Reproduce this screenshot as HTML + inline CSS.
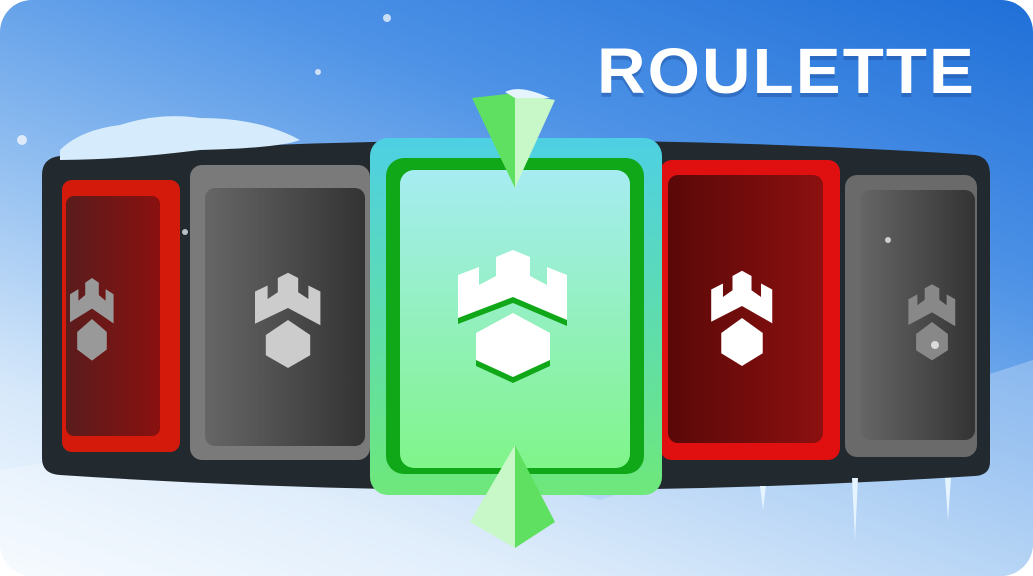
<!DOCTYPE html>
<html><head><style>
body{margin:0;width:1033px;height:576px;overflow:hidden;background:#fff;font-family:"Liberation Sans",sans-serif}
.bg{position:absolute;left:0;top:0;width:1033px;height:576px;border-radius:32px;overflow:hidden;
background:linear-gradient(200deg,#1f6fd8 0%,#4d92e6 30%,#8fbdf0 55%,#d6e8fa 80%,#f4f9ff 100%)}
.abs{position:absolute}
.title{position:absolute;left:597px;top:34px;font-size:64px;font-weight:bold;color:#fff;letter-spacing:2px;transform:scaleX(1.05);transform-origin:left top;text-shadow:0 4px 0 rgba(30,80,160,.45)}
</style></head><body>
<div class="bg">
<svg class="abs" style="left:0;top:0" width="1033" height="576">
<defs>
<linearGradient id="red" x1="0" x2="1"><stop offset="0" stop-color="#5a1c1c"/><stop offset="1" stop-color="#8a1010"/></linearGradient>
<linearGradient id="gray" x1="0" x2="1"><stop offset="0" stop-color="#666"/><stop offset="1" stop-color="#333"/></linearGradient>
<linearGradient id="cen" x1="0" y1="0" x2="0" y2="1"><stop offset="0" stop-color="#4ed0e4"/><stop offset="1" stop-color="#6ee87a"/></linearGradient>
<linearGradient id="cin" x1="0" y1="0" x2="0" y2="1"><stop offset="0" stop-color="#a6ecf2"/><stop offset="1" stop-color="#80f58a"/></linearGradient>
<linearGradient id="red2" x1="0" x2="1"><stop offset="0" stop-color="#5a0808"/><stop offset="1" stop-color="#8c1010"/></linearGradient>
<g id="ic"><path d="M458 275L479 267V285L496 276V257L513 250L530 257V276L547 285V267L567 275V320L513 297L458 318Z"/><path d="M513 313L550 333V360L513 377L476 360V333Z"/></g>
</defs>
<path d="M0 576 L0 470 Q300 420 600 500 L1033 360 L1033 576Z" fill="#fff" opacity=".25"/>
<path d="M42 175 Q42 158 60 156 Q515 125 975 155 Q990 157 990 175 V462 Q990 475 975 476 Q515 505 60 475 Q42 474 42 458Z" fill="#222a30"/>
<path d="M60 150 Q80 130 120 125 Q160 112 200 118 Q260 118 300 140 Q280 148 200 150 Q120 160 60 160Z" fill="#d6ebfb"/>
<rect x="62" y="180" width="118" height="272" rx="10" fill="#d41a0a"/>
<rect x="66" y="196" width="94" height="240" rx="8" fill="url(#red)"/>
<rect x="190" y="165" width="180" height="295" rx="12" fill="#7a7a7a"/>
<rect x="205" y="188" width="160" height="258" rx="10" fill="url(#gray)"/>
<rect x="660" y="160" width="180" height="300" rx="12" fill="#e01010"/>
<rect x="668" y="175" width="155" height="268" rx="10" fill="url(#red2)"/>
<rect x="845" y="175" width="132" height="282" rx="12" fill="#6a6a6a"/>
<rect x="860" y="190" width="115" height="250" rx="10" fill="url(#gray)"/>
<rect x="370" y="138" width="292" height="357" rx="18" fill="url(#cen)"/>
<rect x="386" y="158" width="258" height="316" rx="18" fill="#10a818"/>
<rect x="400" y="170" width="230" height="298" rx="14" fill="url(#cin)"/>
<g fill="#10a818" transform="translate(0,6)"><use href="#ic"/></g>
<g fill="#fff"><use href="#ic"/></g>
<g fill="#ccc" transform="translate(288,320) scale(.6,.75) translate(-513,-313)"><use href="#ic"/></g>
<g fill="#999" transform="translate(92,319) scale(.4,.65) translate(-513,-313)"><use href="#ic"/></g>
<g fill="#fff" transform="translate(742,318) scale(.56,.75) translate(-513,-313)"><use href="#ic"/></g>
<g fill="#888" transform="translate(932,322) scale(.43,.6) translate(-513,-313)"><use href="#ic"/></g>
<path d="M472 98 L515 93 L515 188Z" fill="#60e060"/><path d="M515 93 L555 100 L515 188Z" fill="#c8f8c8"/>
<path d="M505 92 Q520 84 550 98 L515 98Z" fill="#e6f4ff"/>
<path d="M515 445 L470 522 L515 548Z" fill="#c8f8c8"/><path d="M515 445 L555 522 L515 548Z" fill="#60e060"/>
<g fill="#fff" opacity=".7"><circle cx="387" cy="18" r="4"/><circle cx="318" cy="72" r="3"/><circle cx="185" cy="232" r="3"/><circle cx="22" cy="140" r="5"/><circle cx="888" cy="240" r="3"/><circle cx="935" cy="345" r="4"/></g>
<g fill="#e6f4ff"><path d="M852 478 L858 478 L855 540Z"/><path d="M945 478 L951 478 L948 520Z"/><path d="M760 486 L766 486 L763 510Z"/></g>
</svg>
<div class="title">ROULETTE</div>
</div>
</body></html>
